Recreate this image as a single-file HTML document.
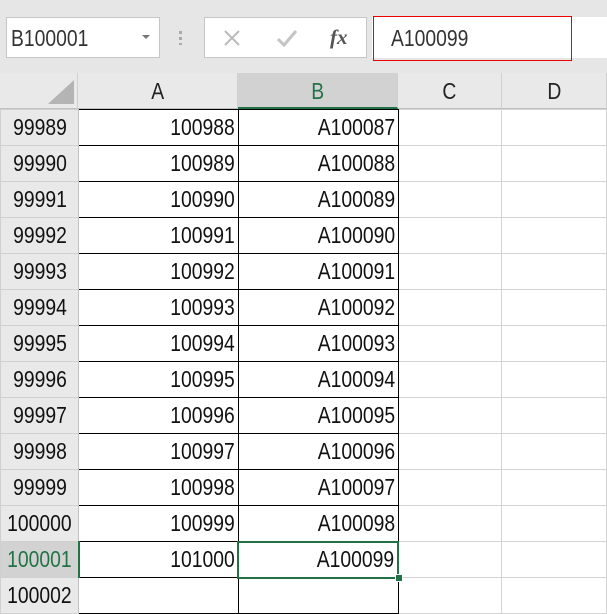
<!DOCTYPE html>
<html><head><style>
body{margin:0;width:607px;height:614px;overflow:hidden;background:#fff;font-family:"Liberation Sans","Noto Sans CJK JP",sans-serif;position:relative}
.abs{position:absolute}
s{text-decoration:none;display:inline-block;transform:scaleX(0.84)}
.top{left:0;top:0;width:607px;height:73px;background:#e6e6e6}
.nb{left:6px;top:17px;height:41px;width:154px;background:#fff;border:1px solid #c6c6c6;font-size:23px;color:#333;line-height:41px;padding-left:4px;box-sizing:border-box}
.nb s{transform-origin:left}
.fb{left:204px;top:17px;width:163px;height:41px;background:#fff;border:1px solid #c6c6c6;box-sizing:border-box}
.fi{left:372px;top:17px;width:235px;height:41px;background:#fff}
.red{left:373px;top:16px;width:199px;height:45px;border:1px solid #e00;box-sizing:border-box;font-size:23px;color:#333;line-height:43px;padding-left:17px}
.red s{transform-origin:left}
.hdr{top:73px;height:36px;background:#e9e9e9;border-right:1px solid #d0d0d0;border-bottom:1px solid #c0c0c0;box-sizing:border-box;text-align:center;font-size:23px;line-height:36px;color:#222}
table{position:absolute;left:0;top:109px;border-collapse:collapse}
td{height:36px;padding:0;box-sizing:border-box;font-size:23px;text-align:right;padding-right:3px;border:1px solid #d4d4d4;color:#111;white-space:nowrap}
td s{transform-origin:right}
td.r s{transform-origin:center}
td.r{background:#e9e9e9;text-align:center;padding:0;width:78px;border-color:#d0d0d0;border-right:1px solid #c0c0c0}
td.a,td.b{border:1px solid #000}
</style></head><body>
<div class="abs top"></div>
<div class="abs nb"><s>B100001</s></div>
<div class="abs" style="left:142px;top:35px;width:0;height:0;border-left:4px solid transparent;border-right:4px solid transparent;border-top:4px solid #777"></div>
<div class="abs" style="left:179px;top:31px;width:3px;height:14px;background:repeating-linear-gradient(#aaa 0 3px,transparent 3px 6px)"></div>
<div class="abs fi"></div>
<div class="abs fb"></div>
<svg class="abs" style="left:223px;top:29px" width="18" height="18"><path d="M2 2L16 16M16 2L2 16" stroke="#bbb" stroke-width="2"/></svg>
<svg class="abs" style="left:276px;top:29px" width="22" height="19"><path d="M2 10L8 16L20 2" stroke="#c4c4c4" stroke-width="3" fill="none"/></svg>
<div class="abs" style="left:330px;top:25px;font-family:'Liberation Serif',serif;font-style:italic;font-weight:bold;font-size:21px;color:#555">fx</div>
<div class="abs red"><s>A100099</s></div>
<div class="abs hdr" style="left:0;width:78px"><svg width="78" height="36" style="position:absolute;left:0;top:0"><polygon points="74,7 74,31 48,31" fill="#b4b4b4"/></svg></div>
<div class="abs hdr" style="left:78px;width:160px"><s>A</s></div>
<div class="abs hdr" style="left:238px;width:160px;background:#d2d2d2;color:#217346;border-bottom:2px solid #217346"><s>B</s></div>
<div class="abs hdr" style="left:398px;width:104px"><s>C</s></div>
<div class="abs hdr" style="left:502px;width:105px"><s>D</s></div>
<table>
<tr><td class="r"><s>99989</s></td><td class="a" style="width:160px"><s>100988</s></td><td class="b" style="width:160px"><s>A100087</s></td><td style="width:104px"></td><td style="width:105px"></td></tr>
<tr><td class="r"><s>99990</s></td><td class="a"><s>100989</s></td><td class="b"><s>A100088</s></td><td></td><td></td></tr>
<tr><td class="r"><s>99991</s></td><td class="a"><s>100990</s></td><td class="b"><s>A100089</s></td><td></td><td></td></tr>
<tr><td class="r"><s>99992</s></td><td class="a"><s>100991</s></td><td class="b"><s>A100090</s></td><td></td><td></td></tr>
<tr><td class="r"><s>99993</s></td><td class="a"><s>100992</s></td><td class="b"><s>A100091</s></td><td></td><td></td></tr>
<tr><td class="r"><s>99994</s></td><td class="a"><s>100993</s></td><td class="b"><s>A100092</s></td><td></td><td></td></tr>
<tr><td class="r"><s>99995</s></td><td class="a"><s>100994</s></td><td class="b"><s>A100093</s></td><td></td><td></td></tr>
<tr><td class="r"><s>99996</s></td><td class="a"><s>100995</s></td><td class="b"><s>A100094</s></td><td></td><td></td></tr>
<tr><td class="r"><s>99997</s></td><td class="a"><s>100996</s></td><td class="b"><s>A100095</s></td><td></td><td></td></tr>
<tr><td class="r"><s>99998</s></td><td class="a"><s>100997</s></td><td class="b"><s>A100096</s></td><td></td><td></td></tr>
<tr><td class="r"><s>99999</s></td><td class="a"><s>100998</s></td><td class="b"><s>A100097</s></td><td></td><td></td></tr>
<tr><td class="r"><s>100000</s></td><td class="a"><s>100999</s></td><td class="b"><s>A100098</s></td><td></td><td></td></tr>
<tr><td class="r" style="background:#d2d2d2;color:#217346;border-right:2px solid #217346"><s>100001</s></td><td class="a"><s>101000</s></td><td class="b" style="border:2px solid #217346"><s>A100099</s></td><td></td><td></td></tr>
<tr><td class="r"><s>100002</s></td><td class="a"></td><td class="b"></td><td></td><td></td></tr>
</table>
<div class="abs" style="left:395px;top:574px;width:6px;height:6px;background:#217346;border:1px solid #fff"></div>
</body></html>
